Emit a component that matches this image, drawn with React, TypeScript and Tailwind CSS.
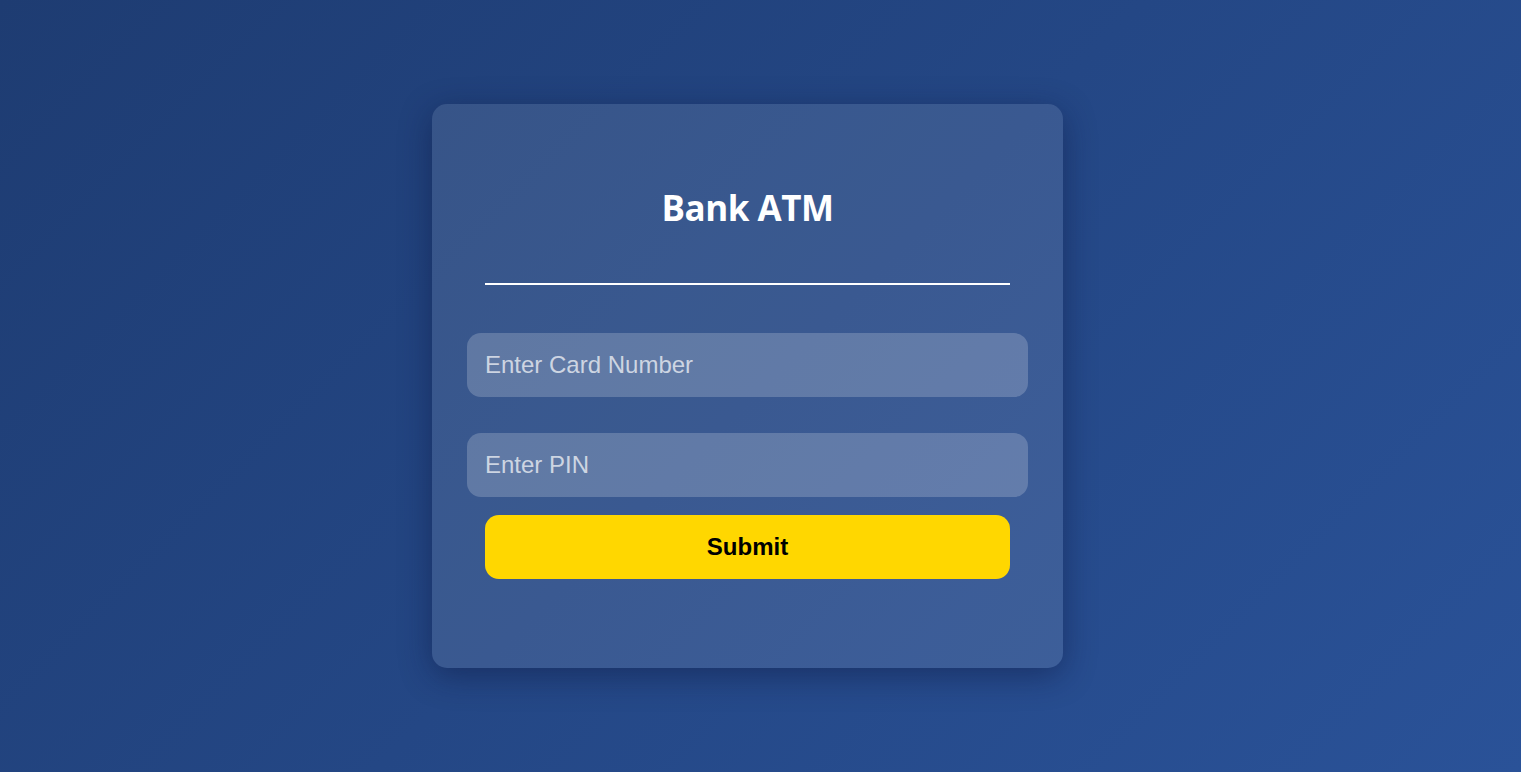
export default function App() {
  return (
    <div className="min-h-[772px] w-full flex items-center justify-center pr-[26px] bg-[linear-gradient(135deg,#1e3c72,#2a5298)]">
      <div className="w-[631px] rounded-[15px] bg-white/10 px-[35px] pt-[74px] pb-[89px] shadow-[0_8px_32px_rgba(10,20,60,0.45)]">
        <h1 className="h-[60px] flex items-center justify-center text-[35px] font-bold text-white font-['Open_Sans',sans-serif] tracking-[-0.5px]">
          Bank ATM
        </h1>
        <div className="mx-[18px] mt-[45px] h-[2px] bg-white" />
        <input
          type="text"
          placeholder="Enter Card Number"
          className="mt-[48px] block w-full h-[64px] rounded-[14px] bg-white/20 px-[18px] text-[24px] text-white placeholder:text-white/70 outline-none font-['Liberation_Sans',Arial,sans-serif]"
        />
        <input
          type="password"
          placeholder="Enter PIN"
          className="mt-[36px] block w-full h-[64px] rounded-[14px] bg-white/20 px-[18px] text-[24px] text-white placeholder:text-white/70 outline-none font-['Liberation_Sans',Arial,sans-serif]"
        />
        <div className="px-[18px]">
          <button className="mt-[18px] w-full h-[64px] rounded-[14px] bg-[#ffd700] text-[24px] font-bold text-black font-['Liberation_Sans',Arial,sans-serif]">
            Submit
          </button>
        </div>
      </div>
    </div>
  );
}
